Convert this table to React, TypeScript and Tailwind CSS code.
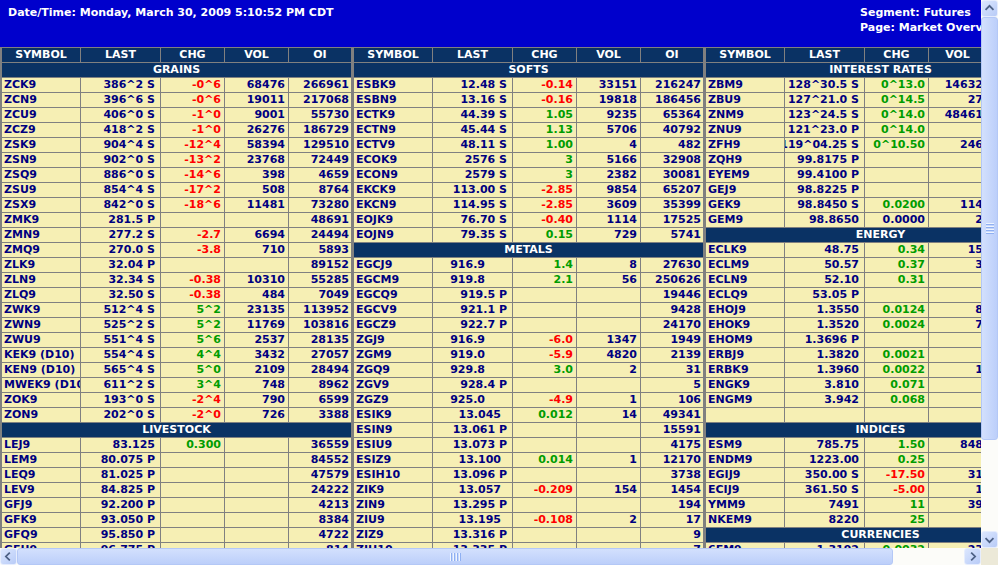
import React from 'react';

type Row =
  | { kind: 'sec'; title: string }
  | { kind: 'row'; sym: string; last: string; chg: string; vol: string; oi: string; pad?: string }
  | { kind: 'blank' };

const sec = (title: string): Row => ({ kind: 'sec', title });
const r = (sym: string, last: string, chg = '', vol = '', oi = '', pad?: string): Row => ({
  kind: 'row',
  sym,
  last,
  chg,
  vol,
  oi,
  pad,
});

const GOLD = 'pr-[27px]';
const SILVER = 'pr-[11px]';

const LEFT: Row[] = [
  sec('GRAINS'),
  r('ZCK9', '386^2 S', '-0^6', '68476', '266961'),
  r('ZCN9', '396^6 S', '-0^6', '19011', '217068'),
  r('ZCU9', '406^0 S', '-1^0', '9001', '55730'),
  r('ZCZ9', '418^2 S', '-1^0', '26276', '186729'),
  r('ZSK9', '904^4 S', '-12^4', '58394', '129510'),
  r('ZSN9', '902^0 S', '-13^2', '23768', '72449'),
  r('ZSQ9', '886^0 S', '-14^6', '398', '4659'),
  r('ZSU9', '854^4 S', '-17^2', '508', '8764'),
  r('ZSX9', '842^0 S', '-18^6', '11481', '73280'),
  r('ZMK9', '281.5 P', '', '', '48691'),
  r('ZMN9', '277.2 S', '-2.7', '6694', '24494'),
  r('ZMQ9', '270.0 S', '-3.8', '710', '5893'),
  r('ZLK9', '32.04 P', '', '', '89152'),
  r('ZLN9', '32.34 S', '-0.38', '10310', '55285'),
  r('ZLQ9', '32.50 S', '-0.38', '484', '7049'),
  r('ZWK9', '512^4 S', '5^2', '23135', '113952'),
  r('ZWN9', '525^2 S', '5^2', '11769', '103816'),
  r('ZWU9', '551^4 S', '5^6', '2537', '28135'),
  r('KEK9 (D10)', '554^4 S', '4^4', '3432', '27057'),
  r('KEN9 (D10)', '565^4 S', '5^0', '2109', '28494'),
  r('MWEK9 (D10)', '611^2 S', '3^4', '748', '8962'),
  r('ZOK9', '193^0 S', '-2^4', '790', '6599'),
  r('ZON9', '202^0 S', '-2^0', '726', '3388'),
  sec('LIVESTOCK'),
  r('LEJ9', '83.125', '0.300', '', '36559'),
  r('LEM9', '80.075 P', '', '', '84552'),
  r('LEQ9', '81.025 P', '', '', '47579'),
  r('LEV9', '84.825 P', '', '', '24222'),
  r('GFJ9', '92.200 P', '', '', '4213'),
  r('GFK9', '93.050 P', '', '', '8384'),
  r('GFQ9', '95.850 P', '', '', '4722'),
  r('GFU9', '96.775 P', '', '', '814'),
];

const MIDDLE: Row[] = [
  sec('SOFTS'),
  r('ESBK9', '12.48 S', '-0.14', '33151', '216247'),
  r('ESBN9', '13.16 S', '-0.16', '19818', '186456'),
  r('ECTK9', '44.39 S', '1.05', '9235', '65364'),
  r('ECTN9', '45.44 S', '1.13', '5706', '40792'),
  r('ECTV9', '48.11 S', '1.00', '4', '482'),
  r('ECOK9', '2576 S', '3', '5166', '32908'),
  r('ECON9', '2579 S', '3', '2382', '30081'),
  r('EKCK9', '113.00 S', '-2.85', '9854', '65207'),
  r('EKCN9', '114.95 S', '-2.85', '3609', '35399'),
  r('EOJK9', '76.70 S', '-0.40', '1114', '17525'),
  r('EOJN9', '79.35 S', '0.15', '729', '5741'),
  sec('METALS'),
  r('EGCJ9', '916.9', '1.4', '8', '27630', GOLD),
  r('EGCM9', '919.8', '2.1', '56', '250626', GOLD),
  r('EGCQ9', '919.5 P', '', '', '19446'),
  r('EGCV9', '921.1 P', '', '', '9428'),
  r('EGCZ9', '922.7 P', '', '', '24170'),
  r('ZGJ9', '916.9', '-6.0', '1347', '1949', GOLD),
  r('ZGM9', '919.0', '-5.9', '4820', '2139', GOLD),
  r('ZGQ9', '929.8', '3.0', '2', '31', GOLD),
  r('ZGV9', '928.4 P', '', '', '5'),
  r('ZGZ9', '925.0', '-4.9', '1', '106', GOLD),
  r('ESIK9', '13.045', '0.012', '14', '49341', SILVER),
  r('ESIN9', '13.061 P', '', '', '15591'),
  r('ESIU9', '13.073 P', '', '', '4175'),
  r('ESIZ9', '13.100', '0.014', '1', '12170', SILVER),
  r('ESIH10', '13.096 P', '', '', '3738'),
  r('ZIK9', '13.057', '-0.209', '154', '1454', SILVER),
  r('ZIN9', '13.295 P', '', '', '194'),
  r('ZIU9', '13.195', '-0.108', '2', '17', SILVER),
  r('ZIZ9', '13.316 P', '', '', '9'),
  r('ZIH10', '13.335 P', '', '', '7'),
];

const RIGHT: Row[] = [
  sec('INTEREST RATES'),
  r('ZBM9', '128^30.5 S', '0^13.0', '14632', '512830'),
  r('ZBU9', '127^21.0 S', '0^14.5', '27', '1120'),
  r('ZNM9', '123^24.5 S', '0^14.0', '48461', '731844'),
  r('ZNU9', '121^23.0 P', '0^14.0', '', '160'),
  r('ZFH9', '119^04.25 S', '0^10.50', '246', '58210'),
  r('ZQH9', '99.8175 P', '', '', '3301'),
  r('EYEM9', '99.4100 P', '', '', '902'),
  r('GEJ9', '98.8225 P', '', '', '1540'),
  r('GEK9', '98.8450 S', '0.0200', '114', '45120'),
  r('GEM9', '98.8650', '0.0000', '2', '1210'),
  sec('ENERGY'),
  r('ECLK9', '48.75', '0.34', '15', '2210'),
  r('ECLM9', '50.57', '0.37', '3', '1830'),
  r('ECLN9', '52.10', '0.31', '', '940'),
  r('ECLQ9', '53.05 P', '', '', '310'),
  r('EHOJ9', '1.3550', '0.0124', '8', '412'),
  r('EHOK9', '1.3520', '0.0024', '7', '380'),
  r('EHOM9', '1.3696 P', '', '', '120'),
  r('ERBJ9', '1.3820', '0.0021', '', '260'),
  r('ERBK9', '1.3960', '0.0022', '1', '190'),
  r('ENGK9', '3.810', '0.071', '', '610'),
  r('ENGM9', '3.942', '0.068', '', '420'),
  { kind: 'blank' },
  sec('INDICES'),
  r('ESM9', '785.75', '1.50', '848', '9120'),
  r('ENDM9', '1223.00', '0.25', '', '310'),
  r('EGIJ9', '350.00 S', '-17.50', '31', '220'),
  r('ECIJ9', '361.50 S', '-5.00', '1', '140'),
  r('YMM9', '7491', '11', '39', '520'),
  r('NKEM9', '8220', '25', '', '88'),
  sec('CURRENCIES'),
  r('6EM9', '1.3192', '0.0032', '23', '1410'),
];

const HEAD = ['SYMBOL', 'LAST', 'CHG', 'VOL', 'OI'];
const COLS_STD = 'grid grid-cols-[78px_79px_63px_63px_62px] gap-px';
const COLS_NARROW = 'grid grid-cols-[78px_79px_63px_57px_68px] gap-px';

function chgColor(chg: string) {
  if (chg.startsWith('-')) return 'text-[#ff0000]';
  if (/^[0.^]+$/.test(chg)) return 'text-[#000080]';
  return 'text-[#009c00]';
}

function Num({ children, className = '' }: { children: React.ReactNode; className?: string }) {
  return (
    <div className={`h-[14px] bg-[#f6efb4] flex justify-end overflow-hidden whitespace-nowrap ${className}`}>
      <span className="shrink-0">{children}</span>
    </div>
  );
}

function Panel({ rows, cols = COLS_STD }: { rows: Row[]; cols?: string }) {
  return (
    <div className="w-[349px] shrink-0 flex flex-col gap-px">
      <div className={cols}>
        {HEAD.map((h) => (
          <div key={h} className="h-[14px] bg-[#0a3264] text-white text-center">
            {h}
          </div>
        ))}
      </div>
      {rows.map((row, i) => {
        if (row.kind === 'sec') {
          return (
            <div key={i} className="h-[14px] bg-[#0a3264] text-white text-center">
              {row.title}
            </div>
          );
        }
        if (row.kind === 'blank') {
          return (
            <div key={i} className={cols}>
              {HEAD.map((h) => (
                <div key={h} className="h-[14px] bg-[#f6efb4]" />
              ))}
            </div>
          );
        }
        return (
          <div key={i} className={`${cols} text-[#000080]`}>
            <div className="h-[14px] bg-[#f6efb4] pl-[2px] overflow-hidden whitespace-nowrap">{row.sym}</div>
            <Num className={row.pad ?? 'pr-[5px]'}>{row.last}</Num>
            <Num className={`pr-[3px] ${chgColor(row.chg)}`}>{row.chg}</Num>
            <Num className="pr-[3px]">{row.vol}</Num>
            <Num className="pr-[2px]">{row.oi}</Num>
          </div>
        );
      })}
    </div>
  );
}

function Chevron({ dir }: { dir: 'up' | 'down' | 'left' | 'right' }) {
  const d = {
    up: 'M4 10 L8.5 5.5 L13 10',
    down: 'M4 7 L8.5 11.5 L13 7',
    left: 'M10 4 L5.5 8.5 L10 13',
    right: 'M7 4 L11.5 8.5 L7 13',
  }[dir];
  return (
    <svg width="17" height="17" viewBox="0 0 17 17" className="block">
      <path d={d} fill="none" stroke="#4d6185" strokeWidth="2" />
    </svg>
  );
}

function ScrollButton({ dir }: { dir: 'up' | 'down' | 'left' | 'right' }) {
  return (
    <div className="w-[17px] h-[17px] shrink-0 rounded-[3px] border border-[#e6edfd] bg-gradient-to-br from-[#dce7fe] to-[#b8cbf7] flex items-center justify-center">
      <Chevron dir={dir} />
    </div>
  );
}

function Grip({ vertical }: { vertical: boolean }) {
  return (
    <div className={`flex ${vertical ? 'flex-col' : 'flex-row'} gap-px`}>
      {[0, 1, 2, 3].map((n) => (
        <div key={n} className={`flex ${vertical ? 'flex-col' : 'flex-row'}`}>
          <div className={vertical ? 'w-[8px] h-px bg-[#eef4fe]' : 'h-[8px] w-px bg-[#eef4fe]'} />
          <div className={vertical ? 'w-[8px] h-px bg-[#8fb0f2]' : 'h-[8px] w-px bg-[#8fb0f2]'} />
        </div>
      ))}
    </div>
  );
}

export default function App() {
  return (
    <div className="w-[998px] h-[565px] overflow-hidden flex font-['DejaVu_Sans',sans-serif] font-bold text-[11px] leading-[14px]">
      <div className="w-[981px] flex flex-col">
        <div className="h-[548px] overflow-hidden bg-[#808080]">
          <div className="w-[1057px]">
            <div className="h-[47px] bg-[#0000cc] text-white flex text-[11px] leading-[15px]">
              <div className="flex-1 pl-[8px] pt-[5px]">Date/Time: Monday, March 30, 2009 5:10:52 PM CDT</div>
              <div className="w-[197px] pt-[5px] whitespace-nowrap">
                <div>Segment: Futures</div>
                <div>Page: Market Overview</div>
              </div>
            </div>
            <div className="flex gap-[3px] pl-[2px] pt-px">
              <Panel rows={LEFT} />
              <Panel rows={MIDDLE} />
              <Panel rows={RIGHT} cols={COLS_NARROW} />
            </div>
          </div>
        </div>
        <div className="h-[17px] bg-[#fcfcf9] flex">
          <ScrollButton dir="left" />
          <div className="w-[876px] h-[17px] rounded-[3px] border border-[#b4c8f6] bg-gradient-to-b from-[#d3e0fd] to-[#bccffa] flex items-center justify-center">
            <Grip vertical={false} />
          </div>
          <div className="flex-1" />
          <ScrollButton dir="right" />
        </div>
      </div>
      <div className="w-[17px] flex flex-col">
        <div className="h-[548px] bg-[#fcfcf9] flex flex-col">
          <ScrollButton dir="up" />
          <div className="h-[423px] rounded-[3px] border border-[#b4c8f6] bg-gradient-to-r from-[#d3e0fd] to-[#bccffa] flex items-center justify-center">
            <Grip vertical={true} />
          </div>
          <div className="flex-1" />
          <ScrollButton dir="down" />
        </div>
        <div className="h-[17px] bg-[#ece9d8]" />
      </div>
    </div>
  );
}
